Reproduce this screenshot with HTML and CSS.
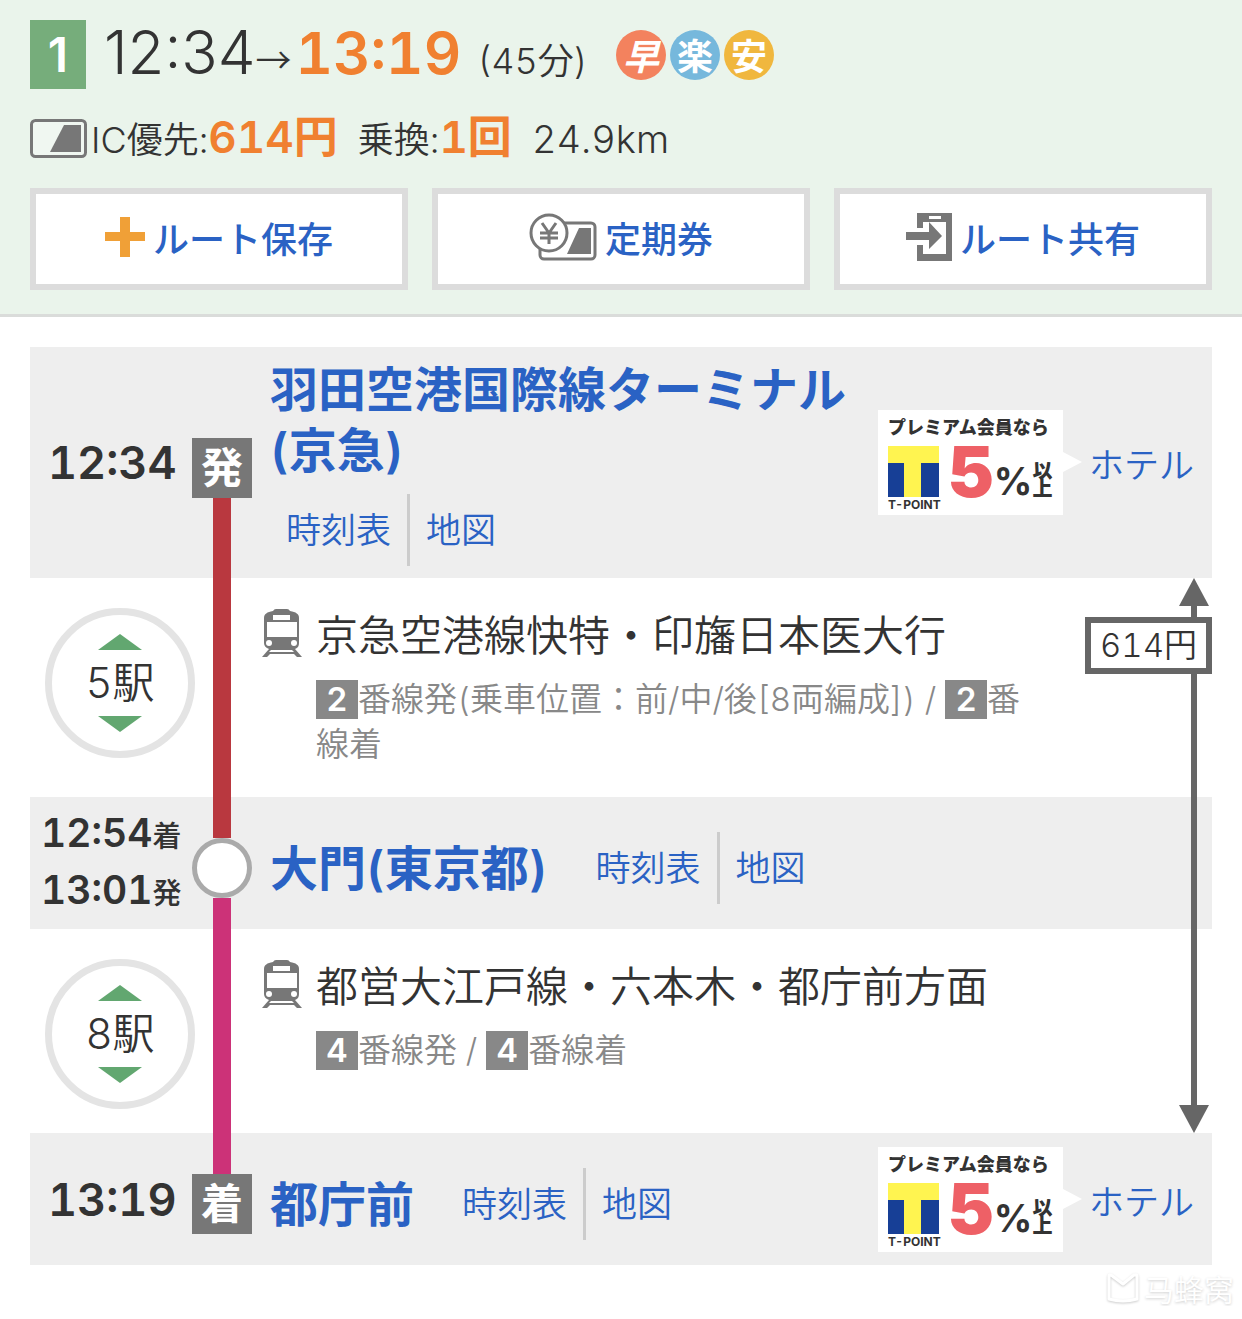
FILE: index.html
```html
<!DOCTYPE html>
<html lang="ja">
<head>
    <meta charset="UTF-8">
    <meta name="viewport" content="width=device-width, initial-scale=1.0">
    <title>羽田空港国際線ターミナル(京急) → 都庁前</title>
    <link rel="stylesheet" href="styles.css">
</head>
<body>
    <!-- shared icons -->
    <svg class="sprite" aria-hidden="true">
        <symbol id="train" viewBox="0 0 40 48">
            <path fill="#777" d="M14 0h11q2 0 3 2c6 1 9 3 9 7v25c0 3-1 5-4 6l7 8h-5l-3-3H8l-3 3H0l7-8c-3-1-5-3-5-6V9c0-4 3-6 9-7q1-2 3-2z"/>
            <path fill="#fff" d="M11 6h17v5H11zM5 13h30v15H5zM9 41h21l2 2H7z"/>
            <circle fill="#fff" cx="7" cy="34" r="3"/>
            <circle fill="#fff" cx="32" cy="34" r="3"/>
        </symbol>
        <symbol id="tpoint" viewBox="0 0 51 51">
            <path fill="#fff450" d="M0 0h51v51H0z"/>
            <path fill="#173f96" d="M0 17h16v34H0zM33 17h18v34H33z"/>
        </symbol>
    </svg>

    <header class="summary">
        <h1 class="summary-time">
            <span class="rank">1</span>
            <span class="depart">12:34</span>
            <span class="arrow">→</span>
            <span class="arrive">13:19</span>
            <span class="duration">(45分)</span>
            <span class="marks">
                <span class="mark fast">早</span>
                <span class="mark easy">楽</span>
                <span class="mark cheap">安</span>
            </span>
        </h1>
        <div class="summary-info">
            <svg class="ic-card" viewBox="0 0 57 39" aria-hidden="true">
                <rect x="1.500" y="1.500" width="54" height="36" rx="4" fill="#fff" fill-opacity=".3" stroke="#777" stroke-width="3"/>
                <path fill="#777" d="M34 6h17v27H20z"/>
            </svg>
            <span>IC優先:<b class="price">614円</b></span>
            <span>乗換:<b class="price">1回</b></span>
            <span class="distance">24.9km</span>
        </div>
        <div class="actions">
            <button type="button" class="action">
                <svg width="40" height="40" viewBox="0 0 40 40" aria-hidden="true"><path fill="#f0a037" d="M15 0h10v15h15v9H25v16H15V24H0v-9h15z"/></svg>
                ルート保存
            </button>
            <button type="button" class="action">
                <svg width="68" height="48" viewBox="0 0 68 48" aria-hidden="true">
                    <rect x="11" y="10" width="55" height="36" rx="4" fill="#fff" stroke="#777" stroke-width="3"/>
                    <path fill="#777" d="M50 15h12v26H38z"/>
                    <circle cx="20" cy="20" r="18" fill="#fff" stroke="#777" stroke-width="3"/>
                    <path fill="none" stroke="#777" stroke-width="3" d="M13 10l7 10 7-10M20 20v11M11 20h18M11 25h18"/>
                </svg>
                定期券
            </button>
            <button type="button" class="action">
                <svg width="46" height="48" viewBox="0 0 46 48" aria-hidden="true">
                    <path fill="#777" d="M11 0h35v48H11z"/>
                    <path fill="#fff" d="M23 3h12v3H23zM17 9h23v32H17z"/>
                    <path fill="#fff" d="M0 15h20v17H0z"/>
                    <path fill="#777" d="M0 19h23V9l13 14-13 13v-9H0z"/>
                    <path fill="#777" d="M11 9h6v6h-6zM11 32h6v9h-6z"/>
                </svg>
                ルート共有
            </button>
        </div>
    </header>

    <main class="route">
        <section class="row station start">
            <div class="time">12:34</div>
            <div class="rail">
                <span class="line"></span>
                <span class="stop">発</span>
                <span class="line keikyu"></span>
            </div>
            <div class="place">
                <h2><a href="#">羽田空港国際線ターミナル(京急)</a></h2>
                <nav class="links"><a href="#">時刻表</a><a href="#">地図</a></nav>
            </div>
            <div class="hotel">
                <div class="banner">
                    <p class="banner-title">プレミアム会員なら</p>
                    <div class="banner-body">
                        <div class="tpoint">
                            <svg width="51" height="51" aria-hidden="true"><use href="#tpoint"/></svg>
                            <small>T-POINT</small>
                        </div>
                        <span class="five">5</span>
                        <span class="percent">%</span>
                        <span class="over">以<br>上</span>
                    </div>
                </div>
                <a href="#">ホテル</a>
            </div>
        </section>

        <div class="fare-section">
            <section class="row ride">
                <div class="stops">
                    <button type="button" class="stops-btn">
                        <svg width="44" height="16" viewBox="0 0 44 16" aria-hidden="true"><path fill="#62a770" d="M22 0l22 16H0z"/></svg>
                        5駅
                        <svg width="44" height="16" viewBox="0 0 44 16" aria-hidden="true"><path fill="#62a770" d="M0 0h44L22 16z"/></svg>
                    </button>
                </div>
                <div class="rail"><span class="line keikyu"></span></div>
                <div class="train">
                    <svg class="train-icon" aria-hidden="true"><use href="#train"/></svg>
                    <div>
                        <h3>京急空港線快特・印旛日本医大行</h3>
                        <p><b>2</b>番線発(乗車位置：前/中/後[8両編成]) / <b>2</b>番線着</p>
                    </div>
                </div>
            </section>

            <section class="row station">
                <div class="time transfer">
                    <div>12:54<small>着</small></div>
                    <div>13:01<small>発</small></div>
                </div>
                <div class="rail">
                    <span class="line keikyu"></span>
                    <span class="stop change"></span>
                    <span class="line oedo"></span>
                </div>
                <div class="place">
                    <h2><a href="#">大門(東京都)</a></h2>
                    <nav class="links"><a href="#">時刻表</a><a href="#">地図</a></nav>
                </div>
            </section>

            <section class="row ride">
                <div class="stops">
                    <button type="button" class="stops-btn">
                        <svg width="44" height="16" viewBox="0 0 44 16" aria-hidden="true"><path fill="#62a770" d="M22 0l22 16H0z"/></svg>
                        8駅
                        <svg width="44" height="16" viewBox="0 0 44 16" aria-hidden="true"><path fill="#62a770" d="M0 0h44L22 16z"/></svg>
                    </button>
                </div>
                <div class="rail"><span class="line oedo"></span></div>
                <div class="train">
                    <svg class="train-icon" aria-hidden="true"><use href="#train"/></svg>
                    <div>
                        <h3>都営大江戸線・六本木・都庁前方面</h3>
                        <p><b>4</b>番線発 / <b>4</b>番線着</p>
                    </div>
                </div>
            </section>

            <!-- fare range, drawn over the rows it covers -->
            <div class="fare">
                <svg width="30" height="28" viewBox="0 0 30 28" aria-hidden="true"><path fill="#666" d="M15 0l15 28H0z"/></svg>
                <span class="fare-line short"></span>
                <span class="fare-price">614円</span>
                <span class="fare-line"></span>
                <svg width="30" height="28" viewBox="0 0 30 28" aria-hidden="true"><path fill="#666" d="M0 0h30L15 28z"/></svg>
            </div>
        </div>

        <section class="row station">
            <div class="time">13:19</div>
            <div class="rail">
                <span class="line oedo"></span>
                <span class="stop">着</span>
                <span class="line"></span>
            </div>
            <div class="place">
                <h2><a href="#">都庁前</a></h2>
                <nav class="links"><a href="#">時刻表</a><a href="#">地図</a></nav>
            </div>
            <div class="hotel">
                <div class="banner">
                    <p class="banner-title">プレミアム会員なら</p>
                    <div class="banner-body">
                        <div class="tpoint">
                            <svg width="51" height="51" aria-hidden="true"><use href="#tpoint"/></svg>
                            <small>T-POINT</small>
                        </div>
                        <span class="five">5</span>
                        <span class="percent">%</span>
                        <span class="over">以<br>上</span>
                    </div>
                </div>
                <a href="#">ホテル</a>
            </div>
        </section>
    </main>

    <footer class="credit">
        <svg width="32" height="32" viewBox="0 0 32 32" aria-hidden="true"><path fill="none" stroke="#fff" stroke-width="3" stroke-linejoin="round" d="M2 27V4q0-2 2-1l12 9 11-9q3-1 3 1v23q-14 4-28 0z"/></svg>
        <span lang="zh">马蜂窝</span>
    </footer>
</body>
</html>
```
FILE: styles.css
```css
* { box-sizing: border-box; }
body {
    margin: 0;
    background: #fff;
    color: #333;
    font-family: Inter, "Noto Sans CJK JP", sans-serif;
    font-size: 36px;
    font-weight: 350;
    font-variant-numeric: tabular-nums;
}
h1, h2, h3, p { margin: 0; font-weight: inherit; }
a { color: #2a62c4; text-decoration: none; }
button {
    font: inherit;
    color: inherit;
    cursor: pointer;
}
svg { display: block; flex: none; }
.sprite { position: absolute; width: 0; height: 0; }

/* summary */
.summary {
    padding: 20px 30px 24px;
    background: #eaf4eb;
    border-bottom: 3px solid #dadcda;
}
.summary-time {
    display: flex;
    align-items: baseline;
    height: 69px;
    line-height: 64px;
    font-size: 36px;
}
.rank {
    align-self: flex-start;
    width: 56px;
    margin-right: 18px;
    background: #76ad7b;
    color: #fff;
    font-size: 48px;
    font-variant-numeric: normal;
    font-weight: 600;
    line-height: 69px;
    text-align: center;
}
.depart {
    font-size: 60px;
    font-variant-numeric: normal;
    font-weight: 300;
}
.arrow { font-family: "Noto Sans CJK JP", sans-serif; }
.arrive {
    margin: 0 16px 0 4px;
    color: #f08030;
    font-size: 58px;
    font-weight: 600;
}
.marks {
    display: flex;
    align-self: center;
    gap: 4px;
    margin-left: 28px;
}
.mark {
    width: 50px;
    height: 50px;
    border-radius: 50%;
    color: #fff;
    font-family: "Noto Sans CJK JP", sans-serif;
    font-weight: 700;
    line-height: 48px;
    text-align: center;
}
.fast { background: #f3825e; font-style: italic; }
.easy { background: #76b8dc; }
.cheap { background: #f0b73e; }
.summary-info {
    display: flex;
    align-items: center;
    height: 99px;
    line-height: 60px;
}
.summary-info span { margin-right: 20px; }
.summary-info .distance { font-size: 38px; }
.ic-card { width: 57px; height: 39px; margin-right: 4px; }
.price {
    color: #f08030;
    font-size: 44px;
    font-weight: 600;
}
.actions {
    display: grid;
    grid-template-columns: repeat(3, 1fr);
    gap: 24px;
}
.action {
    display: flex;
    align-items: center;
    justify-content: center;
    gap: 8px;
    height: 102px;
    padding: 0 0 4px;
    border: 6px solid #dcdcdc;
    background: #fff;
    color: #2a62c4;
    font-weight: 500;
}

/* route */
.route { padding: 30px 30px 0; }
.row {
    display: grid;
    grid-template-columns: 162px 60px 1fr auto;
}
.station {
    min-height: 132px;
    background: #eee;
}
.time {
    align-self: center;
    padding-left: 18px;
    font-size: 45px;
    font-weight: 600;
}
.transfer {
    padding: 0 0 4px 11px;
    font-size: 39px;
    line-height: 57px;
    white-space: nowrap;
}
.transfer small {
    font-size: 29px;
    font-weight: 500;
    line-height: 1;
}
.rail {
    display: flex;
    flex-direction: column;
    align-items: center;
}
.line { flex: 1 1 0; width: 18px; }
.line:first-child { flex-basis: 10px; }
.keikyu { background: #b9383f; }
.oedo { background: #cc3278; }
.stop {
    width: 60px;
    height: 60px;
    background: #777;
    color: #fff;
    font-size: 42px;
    font-weight: 700;
    line-height: 60px;
    text-align: center;
}
.change {
    border: 5px solid #aaa;
    border-radius: 50%;
    background: #fff;
}
.place {
    display: flex;
    flex-wrap: wrap;
    align-items: center;
    align-content: center;
    gap: 13px 32px;
    padding: 22px 0 12px 18px;
}
.start .place { padding-top: 12px; }
.place h2 {
    font-size: 48px;
    font-weight: 600;
    line-height: 61px;
}
.links { display: flex; }
.links a {
    padding: 0 16px;
    font-size: 35px;
    line-height: 72px;
}
.links a + a { border-left: 3px solid #ccc; }
.hotel {
    display: flex;
    align-items: center;
    gap: 26px;
    padding-right: 18px;
    font-size: 35px;
}

/* T-POINT banner */
.banner {
    position: relative;
    width: 185px;
    height: 105px;
    padding: 8px 10px 0;
    background: #fff;
    font-weight: 900;
}
.banner::after {
    content: "";
    position: absolute;
    top: 42px;
    left: 100%;
    border: 10px solid transparent;
    border-left: 19px solid #fff;
    border-right: 0;
}
.banner-title {
    font-size: 18px;
    line-height: 20px;
    white-space: nowrap;
}
.banner-body {
    display: flex;
    padding-top: 8px;
}
.tpoint small {
    display: block;
    font-size: 12px;
    line-height: 16px;
    font-weight: 700;
}
.five {
    margin-left: 8px;
    color: #ee6066;
    font-size: 70px;
    line-height: 52px;
}
.percent {
    font-size: 38px;
    font-weight: 700;
    line-height: 70px;
}
.over {
    padding-top: 16px;
    font-size: 20px;
    line-height: 18px;
}

/* rides */
.stops { padding: 30px 0 24px 15px; }
.stops-btn {
    display: flex;
    flex-direction: column;
    align-items: center;
    justify-content: center;
    gap: 8px;
    width: 150px;
    height: 150px;
    padding: 0;
    border: 7px solid #e4e4e4;
    border-radius: 50%;
    background: #fff;
    font-size: 42px;
    line-height: 50px;
}
.train {
    display: flex;
    gap: 14px;
    padding: 31px 180px 30px 10px;
}
.train-icon { width: 40px; height: 48px; }
.train h3 {
    margin-bottom: 14px;
    font-size: 42px;
    line-height: 54px;
}
.train p {
    color: #888;
    font-size: 33px;
    line-height: 45px;
}
.train b {
    display: inline-block;
    width: 42px;
    height: 39px;
    background: #888;
    color: #fff;
    font-weight: 600;
    line-height: 38px;
    text-align: center;
}

/* fare */
.fare-section { position: relative; }
.fare {
    position: absolute;
    top: 0;
    right: 0;
    bottom: 0;
    display: flex;
    flex-direction: column;
    align-items: flex-end;
}
.fare svg { margin-right: 3px; }
.fare-line {
    flex: 1;
    width: 6px;
    margin-right: 15px;
    background: #666;
}
.fare-line.short { flex: 0 0 11px; }
.fare-price {
    padding: 0 9px;
    border: 6px solid #666;
    background: #fff;
    font-size: 33px;
    line-height: 45px;
}

.credit {
    display: flex;
    align-items: center;
    justify-content: flex-end;
    gap: 5px;
    padding: 5px 8px 0;
    color: #fff;
    font-family: "Noto Sans CJK SC", sans-serif;
    font-size: 30px;
    line-height: 36px;
    text-shadow: 0 1px 3px rgba(0,0,0,0.2);
}
.credit svg { filter: drop-shadow(0 1px 1px rgba(0,0,0,0.2)); }
```
